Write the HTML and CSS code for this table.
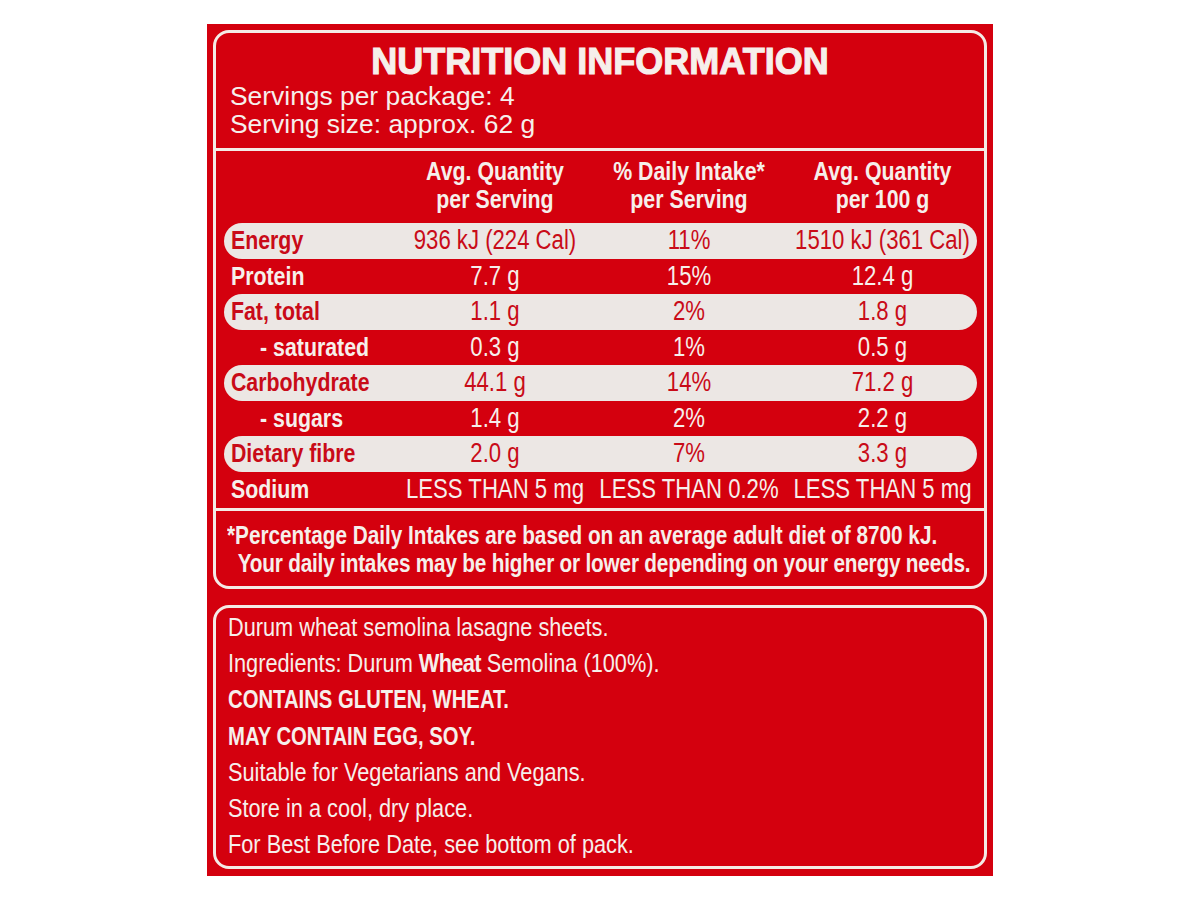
FILE: index.html
```html
<!DOCTYPE html>
<html lang="en">
<head>
<meta charset="utf-8">
<title>Nutrition Information</title>
<link rel="stylesheet" href="styles.css">
</head>
<body>
<div class="panel">
  <section class="box nutrition">
    <div class="intro">
      <h1 class="title">NUTRITION INFORMATION</h1>
      <p class="serv">Servings per package: 4</p>
      <p class="serv">Serving size: approx. 62 g</p>
    </div>
    <div class="table">
      <div class="row head">
        <div class="label"></div>
        <div class="cell">Avg. Quantity<br>per Serving</div>
        <div class="cell">% Daily Intake*<br>per Serving</div>
        <div class="cell">Avg. Quantity<br>per 100 g</div>
      </div>
      <div class="row pill">
        <div class="label">Energy</div>
        <div class="cell">936 kJ (224 Cal)</div>
        <div class="cell">11%</div>
        <div class="cell">1510 kJ (361 Cal)</div>
      </div>
      <div class="row">
        <div class="label">Protein</div>
        <div class="cell">7.7 g</div>
        <div class="cell">15%</div>
        <div class="cell">12.4 g</div>
      </div>
      <div class="row pill">
        <div class="label">Fat, total</div>
        <div class="cell">1.1 g</div>
        <div class="cell">2%</div>
        <div class="cell">1.8 g</div>
      </div>
      <div class="row">
        <div class="label sub">- saturated</div>
        <div class="cell">0.3 g</div>
        <div class="cell">1%</div>
        <div class="cell">0.5 g</div>
      </div>
      <div class="row pill">
        <div class="label">Carbohydrate</div>
        <div class="cell">44.1 g</div>
        <div class="cell">14%</div>
        <div class="cell">71.2 g</div>
      </div>
      <div class="row">
        <div class="label sub">- sugars</div>
        <div class="cell">1.4 g</div>
        <div class="cell">2%</div>
        <div class="cell">2.2 g</div>
      </div>
      <div class="row pill">
        <div class="label">Dietary fibre</div>
        <div class="cell">2.0 g</div>
        <div class="cell">7%</div>
        <div class="cell">3.3 g</div>
      </div>
      <div class="row">
        <div class="label">Sodium</div>
        <div class="cell">LESS THAN 5 mg</div>
        <div class="cell">LESS THAN 0.2%</div>
        <div class="cell">LESS THAN 5 mg</div>
      </div>
    </div>
    <div class="footnote">
      <span class="fn-line">*Percentage Daily Intakes are based on an average adult diet of 8700 kJ.</span>
      <span class="fn-line indent">Your daily intakes may be higher or lower depending on your energy needs.</span>
    </div>
  </section>
  <section class="box info">
    <p>Durum wheat semolina lasagne sheets.</p>
    <p>Ingredients: Durum <b>Wheat</b> Semolina (100%).</p>
    <p class="strong">CONTAINS GLUTEN, WHEAT.</p>
    <p class="strong">MAY CONTAIN EGG, SOY.</p>
    <p>Suitable for Vegetarians and Vegans.</p>
    <p>Store in a cool, dry place.</p>
    <p>For Best Before Date, see bottom of pack.</p>
  </section>
</div>
</body>
</html>
```

FILE: styles.css
```css
* { box-sizing: border-box; }
html, body { margin: 0; padding: 0; background: #ffffff; }
body { font-family: "Liberation Sans", Arial, sans-serif; color: #f6efeb; }

.panel {
  margin: 24px 0 0 207px;
  width: 786px;
  height: 852px;
  background: #d4000e;
  padding: 6px 6px 0 6px;
  display: flex;
  flex-direction: column;
  gap: 16px;
}

.box {
  border: 3px solid #f4ebe6;
  border-radius: 16px;
}

.nutrition { height: 559px; display: flex; flex-direction: column; }

.intro {
  padding: 9px 0 10px 14px;
  border-bottom: 3px solid #f4ebe6;
}
.title {
  margin: 0;
  text-align: center;
  font-family: "Liberation Sans", Arial, sans-serif;
  font-weight: 700;
  font-size: 36px;
  line-height: 40px;
  -webkit-text-stroke: 1.1px #f6efeb;
  padding-right: 14px;
}
.serv {
  margin: 0;
  font-size: 26.4px;
  line-height: 28px;
}

/* condensed text: Helvetica Condensed look */
.row .cell,
.row .label,
.fn-line,
.info p {
  transform: scaleX(0.82);
}

.table {
  padding: 0 7px 0 8px;
}
.row {
  display: grid;
  grid-template-columns: 176px 190px 198px 189px;
  align-items: center;
  height: 35.5px;
}
.row .label {
  transform-origin: left center;
  padding-left: 8.5px;
  font-weight: 700;
  font-size: 26px;
  line-height: 35px;
  white-space: nowrap;
}
.row .label.sub { padding-left: 44px; }
.row .cell {
  margin: 0 -30px;
  transform-origin: center center;
  text-align: center;
  font-size: 27px;
  line-height: 35px;
  white-space: nowrap;
}
.row.head {
  height: auto;
  padding: 6px 0 10px;
}
.row.head .cell {
  font-weight: 700;
  font-size: 26px;
  line-height: 28px;
}
.row.pill {
  background: #ece7e4;
  color: #c90b18;
  border-radius: 18px;
}

.footnote {
  margin-top: 1px;
  border-top: 3px solid #f4ebe6;
  padding: 10px 0 0 11px;
  font-weight: 700;
  font-size: 25.3px;
  line-height: 28px;
}
.fn-line {
  display: block;
  white-space: nowrap;
  transform-origin: left center;
}
.fn-line.indent {
  padding-left: 13px;
  letter-spacing: -0.23px;
}

.info {
  height: 264px;
  padding: 1px 0 0 12px;
  font-size: 26.5px;
}
.info p {
  margin: 0;
  line-height: 36.2px;
  white-space: nowrap;
  transform-origin: left center;
}
.info p.strong {
  font-weight: 700;
  transform: scaleX(0.765);
}
.info b { font-weight: 700; letter-spacing: -0.8px; }
```
